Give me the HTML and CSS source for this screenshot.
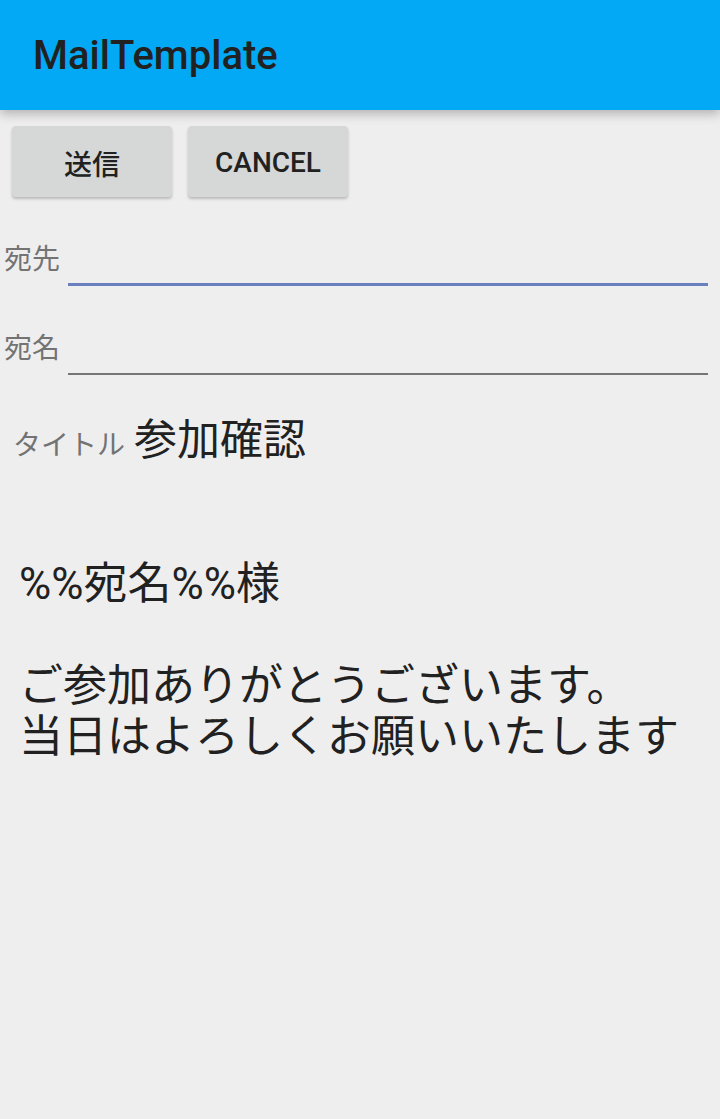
FILE: index.html
```html
<!DOCTYPE html>
<html lang="ja">
<head>
    <meta charset="UTF-8"/>
    <title>MailTemplate</title>
    <link rel="stylesheet" href="styles.css">
</head>
<body>
<header class="app-bar">
    <h1>MailTemplate</h1>
</header>

<div class="actions">
    <button type="button">送信</button>
    <button type="button">CANCEL</button>
</div>

<div class="field">
    <label for="to">宛先</label>
    <div class="input focused" id="to"></div>
</div>
<div class="field">
    <label for="name">宛名</label>
    <div class="input" id="name"></div>
</div>

<div class="subject">
    <span class="subject-label">タイトル</span>
    <span class="subject-value">参加確認</span>
</div>

<div class="body-text">%%宛名%%様

ご参加ありがとうございます。
当日はよろしくお願いいたします</div>
</body>
</html>
```

FILE: styles.css
```css
body {
    margin: 0;
    background-color: #eeeeee;
    font-family: Roboto, "Noto Sans CJK JP", sans-serif;
    color: #212121;
}

.app-bar {
    height: 110px;
    background-color: #03a9f4;
    box-shadow: 0 4px 10px rgba(0, 0, 0, 0.25);
    display: flex;
    align-items: center;
    padding-left: 33px;
    position: relative;
}

.app-bar h1 {
    margin: 0;
    font-size: 40px;
    font-weight: 500;
    color: #212121;
}

.actions {
    display: flex;
    gap: 16px;
    padding: 16px 12px 0;
}

.actions button {
    width: 160px;
    height: 71px;
    border: none;
    border-radius: 4px;
    background-color: #d6d7d7;
    box-shadow: 0 2px 3px rgba(0, 0, 0, 0.22);
    font-family: Roboto, "Noto Sans CJK JP", sans-serif;
    font-size: 28px;
    font-weight: 500;
    color: #212121;
    padding-top: 3px;
}

.field {
    display: flex;
    align-items: center;
    padding: 0 12px 0 4px;
    margin-top: 37px;
}

.field label {
    width: 64px;
    font-size: 28px;
    line-height: 34px;
    color: #737373;
}

.input {
    flex: 1;
    height: 52px;
    box-sizing: border-box;
    border-bottom: 2px solid #757575;
}

.input.focused {
    border-bottom: 3px solid #6a7fbd;
}

.subject {
    display: flex;
    align-items: baseline;
    gap: 9px;
    padding-left: 13px;
    margin-top: 30px;
}

.subject-label {
    font-size: 28px;
    color: #737373;
}

.subject-value {
    font-size: 43px;
    color: #212121;
}

.body-text {
    white-space: pre-line;
    padding-left: 19px;
    margin-top: 92px;
    font-size: 44px;
    line-height: 51px;
}
```
